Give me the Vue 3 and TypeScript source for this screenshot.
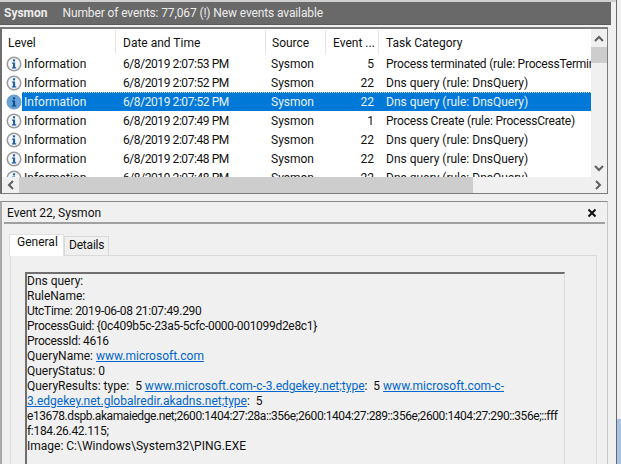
<script setup lang="ts">
interface Row { date: string; id: number; task: string; selected?: boolean }
const rows: Row[] = [
  { date: '6/8/2019 2:07:53 PM', id: 5, task: 'Process terminated (rule: ProcessTerminate)' },
  { date: '6/8/2019 2:07:52 PM', id: 22, task: 'Dns query (rule: DnsQuery)' },
  { date: '6/8/2019 2:07:52 PM', id: 22, task: 'Dns query (rule: DnsQuery)', selected: true },
  { date: '6/8/2019 2:07:49 PM', id: 1, task: 'Process Create (rule: ProcessCreate)' },
  { date: '6/8/2019 2:07:48 PM', id: 22, task: 'Dns query (rule: DnsQuery)' },
  { date: '6/8/2019 2:07:48 PM', id: 22, task: 'Dns query (rule: DnsQuery)' },
  { date: '6/8/2019 2:07:48 PM', id: 22, task: 'Dns query (rule: DnsQuery)' },
]
</script>

<template>
  <div class="screen">
    <div class="left">
      <div class="titlebar">
        <b class="title-name">Sysmon</b>
        <span class="title-text">Number of events: 77,067 (!) New events available</span>
      </div>

      <section class="list">
        <div class="list-main">
          <div class="list-view">
            <div class="cols head">
              <div class="h">Level</div>
              <div class="h h-date">Date and Time</div>
              <div class="h">Source</div>
              <div class="h h-event">Event ...</div>
              <div class="h h-last">Task Category</div>
            </div>
            <div class="rows">
              <div v-for="(r, i) in rows" :key="i" class="cols row" :class="{ selected: r.selected }">
                <div class="level">
                  <svg class="info" width="16" height="16" viewBox="0 0 16 16">
                    <circle cx="8" cy="8" r="7.5" class="ring" />
                    <circle cx="8" cy="8" r="6" class="disc" />
                    <rect x="6.9" y="3.2" width="2.2" height="2.2" rx="0.6" class="glyph" />
                    <path d="M6 6.4H9.1V11.2H10.2V12.6H5.9V11.2H7V7.7H6Z" class="glyph" />
                  </svg>
                  <span class="level-text">Information</span>
                </div>
                <div class="cell date">{{ r.date }}</div>
                <div class="cell source">Sysmon</div>
                <div class="cell num">{{ r.id }}</div>
                <div class="cell task" :class="{ tight: r.id !== 22 }">{{ r.task }}</div>
              </div>
            </div>
          </div>
          <div class="vbar">
            <svg class="arrow" width="16" height="18" viewBox="0 0 16 18"><path d="M4 12L8 8L12 12" /></svg>
            <div class="vthumb"></div>
            <div class="spacer"></div>
            <svg class="arrow" width="16" height="17" viewBox="0 0 16 17"><path d="M4 6L8 10L12 6" /></svg>
          </div>
        </div>
        <div class="hbar">
          <svg class="arrow" width="17" height="16" viewBox="0 0 17 16"><path d="M11 4L7 8L11 12" /></svg>
          <div class="hthumb"></div>
          <div class="spacer"></div>
          <svg class="arrow" width="17" height="16" viewBox="0 0 17 16"><path d="M6 4L10 8L6 12" /></svg>
        </div>
      </section>

      <section class="detail">
        <div class="detail-head">
          <span>Event 22, Sysmon</span>
          <svg class="close" width="10" height="10" viewBox="0 0 10 10"><path d="M1.5 1.5L8.5 8.5M8.5 1.5L1.5 8.5" /></svg>
        </div>
        <div class="tabs">
          <div class="tab active">General</div>
          <div class="tab">Details</div>
        </div>
        <div class="tab-body">
          <div class="message">
            <div>Dns query:</div>
            <div>RuleName:</div>
            <div class="dense">UtcTime: 2019-06-08 21:07:49.290</div>
            <div class="dense">ProcessGuid: {0c409b5c-23a5-5cfc-0000-001099d2e8c1}</div>
            <div class="dense">ProcessId: 4616</div>
            <div>QueryName: <a>www.microsoft.com</a></div>
            <div>QueryStatus: 0</div>
            <div>QueryResults: type:&nbsp; 5 <a>www.microsoft.com-c-3.edgekey.net;type</a>:&nbsp; 5 <a>www.microsoft.com-c-</a></div>
            <div><a>3.edgekey.net.globalredir.akadns.net;type</a>:&nbsp; 5</div>
            <div class="denser">e13678.dspb.akamaiedge.net;2600:1404:27:28a::356e;2600:1404:27:289::356e;2600:1404:27:290::356e;::fff</div>
            <div class="dense">f:184.26.42.115;</div>
            <div>Image: C:\Windows\System32\PING.EXE</div>
          </div>
        </div>
      </section>
    </div>

    <div class="edge">
      <div class="edge-fill"></div>
      <div class="edge-blue"></div>
    </div>
  </div>
</template>

<style scoped>
.screen {
  width: 621px;
  height: 464px;
  display: flex;
  overflow: hidden;
  background: #f0f0f0;
  color: #111;
  font-family: Roboto, "Noto Sans", sans-serif;
  font-size: 12px;
}
.left {
  width: 616px;
  display: flex;
  flex-direction: column;
  flex: none;
  border-top: 2px solid #d0d0d0;
  box-sizing: border-box;
}
.titlebar {
  width: 611px;
  height: 23px;
  flex: none;
  background: #696969;
  color: #ececec;
  display: flex;
  align-items: center;
  gap: 15px;
  padding: 0 0 1px 4px;
  box-sizing: border-box;
  white-space: nowrap;
  border-bottom: 1px solid #5a5a5a;
}
.title-name { font-weight: 700; }
.title-text { letter-spacing: -0.12px; }
.list {
  width: 608px;
  height: 167px;
  margin-top: 2px;
  flex: none;
  box-sizing: border-box;
  border: 2px solid #7c7c7c;
  border-left-color: #6e6e6e;
  border-right-width: 1px;
  border-bottom-width: 1px;
  background: #fff;
  display: flex;
  flex-direction: column;
}
.list-main { display: flex; flex: 1; min-height: 0; }
.list-view { width: 589px; flex: none; overflow: hidden; }
.cols {
  display: grid;
  grid-template-columns: 114px 150px 60px 53px 212px;
  width: 589px;
}
.head { height: 25px; align-items: center; }
.h {
  height: 24px;
  line-height: 26px;
  padding-left: 6px;
  border-right: 1px solid #e5e5e5;
  box-sizing: border-box;
  white-space: nowrap;
}
.h-date { padding-left: 7px; }
.h-event { padding-left: 7px; }
.h-last { border-right: 0; padding-left: 7px; }
.rows { height: 123px; overflow: hidden; }
.row { height: 19px; line-height: 20px; white-space: nowrap; position: relative; }
.level { display: flex; align-items: center; padding-left: 4px; }
.level-text { margin-left: 2px; line-height: 20px; height: 19px; }
.cell { padding-left: 7px; overflow: hidden; box-sizing: border-box; }
.date { letter-spacing: -0.42px; }
.source { padding-left: 5px; }
.num { padding-right: 5px; text-align: right; }
.task { padding-left: 7px; }
.task.tight { letter-spacing: -0.22px; }
.ring { fill: #9a9a9a; }
.disc { fill: #f4f6fa; }
.glyph { fill: #1f5fa8; }
.selected { background: linear-gradient(#0078d7, #0078d7) no-repeat 20px 0 / 569px 19px; color: #fff; }
.selected::after {
  content: "";
  position: absolute;
  left: 20px;
  right: 0;
  top: 0;
  bottom: 0;
  border-top: 1px dotted #c8d49a;
  pointer-events: none;
}
.selected .level-text, .selected .cell { color: #e8f2fc; }
.selected .ring { fill: #6f9ec9; }
.selected .disc { fill: #66a3d8; }
.selected .glyph { fill: #0f4f8e; }
.vbar {
  width: 16px;
  flex: none;
  background: #f0f0f0;
  display: flex;
  flex-direction: column;
}
.vthumb { height: 16px; background: #cdcdcd; flex: none; }
.spacer { flex: 1; }
.arrow { display: block; flex: none; fill: none; stroke: #606060; stroke-width: 2; }
.hbar {
  height: 16px;
  flex: none;
  background: #f0f0f0;
  display: flex;
}
.hthumb { width: 454px; background: #cdcdcd; flex: none; }
.detail {
  width: 608px;
  flex: 1;
  min-height: 0;
  margin-top: 7px;
  box-sizing: border-box;
  border-top: 1px solid #8a8a8a;
  border-left: 2px solid #a8a8a8;
  border-right: 1px solid #c8c8c8;
  display: flex;
  flex-direction: column;
}
.detail-head {
  height: 22px;
  margin: 0 2px;
  padding: 1px 8px 0 3px;
  flex: none;
  box-sizing: border-box;
  border-bottom: 2px solid #a0a0a0;
  display: flex;
  align-items: center;
  justify-content: space-between;
  white-space: nowrap;
}
.close { fill: none; stroke: #111; stroke-width: 2; }
.tabs {
  display: flex;
  align-items: flex-end;
  height: 31px;
  flex: none;
  padding-left: 8px;
  position: relative;
  z-index: 1;
}
.tab {
  height: 19px;
  line-height: 17px;
  padding: 0 4px;
  box-sizing: border-box;
  border: 1px solid #d9d9d9;
  border-bottom: 0;
  white-space: nowrap;
  margin-left: -1px;
  letter-spacing: -0.2px;
}
.tab.active {
  height: 22px;
  line-height: 15px;
  padding: 0 7px;
  border-color: #e0e0e0;
  margin-right: 1px;
  margin-bottom: -1px;
  background: #fff;
  width: 55px;
  letter-spacing: 0;
}
.tab-body {
  flex: 1;
  margin: 0 10px 0 8px;
  box-sizing: border-box;
  border: 1px solid #dadada;
  border-bottom: 0;
  padding: 16px 31px 0 14px;
  background: #f0f0f0;
  min-height: 0;
}
.message {
  height: 100%;
  box-sizing: border-box;
  border-top: 2px solid #6f6f6f;
  border-left: 2px solid #6f6f6f;
  border-right: 1px solid #dcdcdc;
  padding: 0;
  line-height: 15px;
  white-space: nowrap;
  overflow: hidden;
}
.dense { letter-spacing: -0.3px; }
.denser { letter-spacing: -0.42px; }
.message a { color: #0066cc; text-decoration: underline; }
.edge {
  width: 5px;
  flex: none;
  border-left: 1px solid #6a6a6a;
  display: flex;
  flex-direction: column;
  box-sizing: border-box;
}
.edge-fill { height: 419px; background: #f0f0f0; flex: none; }
.edge-blue { flex: 1; background: #a9c3e3; }
</style>
